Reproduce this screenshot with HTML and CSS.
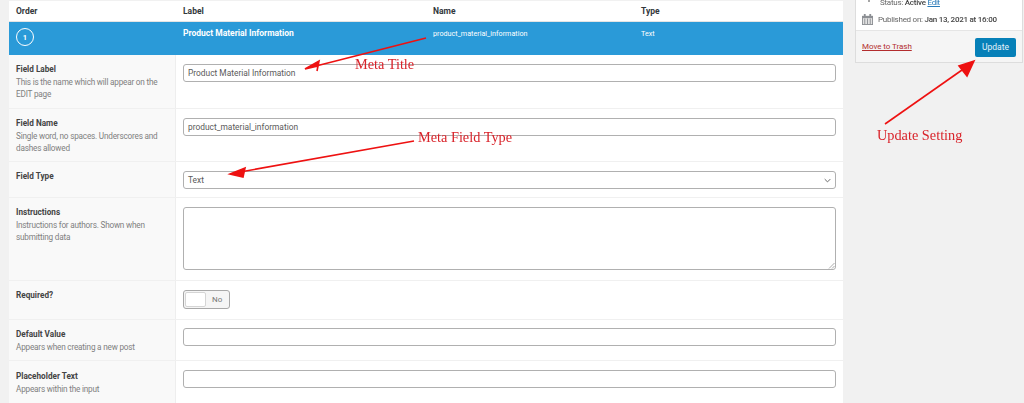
FILE: index.html
```html
<!DOCTYPE html>
<html lang="en">
<head>
<meta charset="utf-8">
<title>Field group editor</title>
<link rel="stylesheet" href="styles.css">
</head>
<body>
<div class="page">
  <main class="panel">
    <div class="cols head">
      <div class="c-order">Order</div>
      <div class="c-label">Label</div>
      <div class="c-name">Name</div>
      <div class="c-type">Type</div>
    </div>
    <div class="cols active">
      <div class="c-order"><span class="badge">1</span></div>
      <div class="c-label strong">Product Material Information</div>
      <div class="c-name">product_material_information</div>
      <div class="c-type">Text</div>
    </div>
    <section class="row r-label">
      <div class="side"><h4>Field Label</h4><p>This is the name which will appear on the EDIT page</p></div>
      <div class="main"><div class="input">Product Material Information</div></div>
    </section>
    <section class="row r-name">
      <div class="side"><h4>Field Name</h4><p>Single word, no spaces. Underscores and dashes allowed</p></div>
      <div class="main"><div class="input">product_material_information</div></div>
    </section>
    <section class="row r-type">
      <div class="side"><h4>Field Type</h4></div>
      <div class="main"><div class="input select">Text
        <svg class="chev" viewBox="0 0 10 6" width="7" height="5"><path d="M1 1l4 4 4-4" fill="none" stroke="#666" stroke-width="1.400"/></svg>
      </div></div>
    </section>
    <section class="row r-inst">
      <div class="side"><h4>Instructions</h4><p>Instructions for authors. Shown when submitting data</p></div>
      <div class="main"><div class="input area">
        <svg class="grip" viewBox="0 0 7 7" width="7" height="7"><path d="M1 6.500L6.500 1M4 6.500L6.500 4" stroke="#888" stroke-width=".7"/></svg>
      </div></div>
    </section>
    <section class="row r-req">
      <div class="side"><h4>Required?</h4></div>
      <div class="main"><div class="toggle"><span class="knob"></span><span class="no">No</span></div></div>
    </section>
    <section class="row r-def">
      <div class="side"><h4>Default Value</h4><p>Appears when creating a new post</p></div>
      <div class="main"><div class="input"></div></div>
    </section>
    <section class="row r-ph">
      <div class="side"><h4>Placeholder Text</h4><p>Appears within the input</p></div>
      <div class="main"><div class="input"></div></div>
    </section>
  </main>
  <aside class="card">
    <div class="card-body">
      <div class="meta status"><svg class="pin" viewBox="0 0 10 12" width="10" height="12"><path d="M5 0v8" stroke="#888" stroke-width="1.500"/></svg><span>Status: <b>Active</b> <a>Edit</a></span></div>
      <div class="meta pub">
        <svg class="cal" viewBox="0 0 12 12" width="11" height="11"><path d="M0 2h12v10H0z" fill="#8c8f94"/><path d="M2 0h2v3H2zM8 0h2v3H8z" fill="#8c8f94"/><path d="M1 4.500h10V11H1z" fill="#e2e2e2"/><path d="M3 5v6M6 5v6M9 5v6" stroke="#8c8f94"/></svg>
        <span>Published on: <b>Jan 13, 2021 at 16:00</b></span>
      </div>
    </div>
    <div class="card-foot"><a class="trash">Move to Trash</a><button class="update" type="button">Update</button></div>
  </aside>
</div>
<svg class="arrows" viewBox="0 0 1024 403" width="1024" height="403">
  <g stroke="#ee1111" stroke-width="1.600" fill="#ee1111">
    <path d="M426 38L316 66"/><path d="M305 69L319 61L317 71L318 66Z"/>
    <path d="M414 141L240 172"/><path d="M230 174L245 168L243 177Z"/>
    <path d="M885 124L962 70"/><path d="M974 61L967 76L959 66Z"/>
  </g>
</svg>
<span class="note n1">Meta Title</span>
<span class="note n2">Meta Field Type</span>
<span class="note n3">Update Setting</span>
</body>
</html>
```
FILE: styles.css
```css
* { box-sizing: border-box; }
html, body { margin: 0; padding: 0; }
body {
  width: 1024px; height: 403px; overflow: hidden; position: relative;
  background: #f1f1f1;
  font-family: Roboto, "Liberation Sans", sans-serif;
  font-size: 8px; color: #444;
}
.page { display: flex; align-items: flex-start; padding: 1px 2px 0 9px; gap: 12px; filter: blur(.35px); }
.panel { width: 834px; flex: none; background: #fff; height: 402px; overflow: hidden; }

.cols { display: flex; padding-left: 7px; }
.head { height: 21px; align-items: center; font-size: 8.500px; font-weight: 700; color: #32373c; border-bottom: 1px solid #e4e4e4; }
.active { height: 33px; background: #2a9ad8; color: #fff; padding-top: 7px; align-items: flex-start; font-size: 7.200px; }
.c-order { width: 167px; }
.c-label { width: 250px; }
.c-name { width: 208px; }
.c-type { flex: 1; }
.strong { font-size: 8.500px; line-height: 9px; font-weight: 700; }
.badge {
  display: flex; width: 18px; height: 18px; margin-top: -1px; border: 1px solid #fff; border-radius: 50%;
  align-items: center; justify-content: center; font-size: 7.500px; font-weight: 700;
}

.row { display: flex; border-bottom: 1px solid #f0f0f0; }
.side { width: 167px; background: #f9f9f9; border-right: 1px solid #eee; padding: 8px 7px 0; flex: none; }
.side h4 { margin: 0; font-size: 8.200px; line-height: 12px; font-weight: 700; color: #444; }
.side p { margin: 2px 0 0; line-height: 11.500px; color: #808080; font-size: 8.200px; letter-spacing: -.2px; }
.main { flex: 1; padding: 9px 7px 0 7px; }
.r-label { height: 54px; }
.r-name { height: 53px; }
.r-type { height: 36px; }
.r-inst { height: 83px; }
.r-req { height: 39px; }
.r-def { height: 41px; }
.r-def .main { padding-top: 8px; }
.r-ph { height: 42px; border-bottom: 0; }
.r-ph .side { padding-top: 9px; }

.input {
  height: 18px; border: 1px solid #b0b0b0; border-radius: 3px; background: #fff;
  padding: 0 4px; line-height: 17px; font-size: 8.400px; color: #5a5a5a; position: relative;
}
.select { display: flex; align-items: center; justify-content: space-between; padding-right: 4px; }
.area { height: 63px; }
.grip { position: absolute; right: 0; bottom: 0; }
.chev { flex: none; }
.toggle {
  width: 47px; height: 19px; border: 1px solid #a8a8a8; border-radius: 3px; background: #f5f5f5;
  display: flex; align-items: center; padding-left: 1px;
}
.knob { width: 21px; height: 15px; background: #fff; border: 1px solid #d5d5d5; border-radius: 2px; flex: none; }
.no { margin-left: 6px; color: #777; }

.card { width: 168px; flex: none; margin-top: -1px; background: #fff; border: 1px solid #ddd; border-top: 0; color: #666; }
.card-body { height: 30px; position: relative; padding-left: 6px; overflow: hidden; }
.meta { display: flex; gap: 5px; align-items: center; white-space: nowrap; letter-spacing: -.25px; }
.meta b { font-weight: 500; color: #444; }
.meta a { color: #2a7ab8; text-decoration: underline; }
.status { height: 6px; align-items: flex-end; line-height: 6px; margin-bottom: 8px; }
.status .pin { margin: 0 1px 0 2px; }
.pub { height: 11px; }
.card-foot { height: 32px; background: #f5f5f5; border-top: 1px solid #e5e5e5; display: flex; justify-content: space-between; align-items: center; padding: 0 6px; }
.trash { color: #b32d2e; text-decoration: underline; letter-spacing: -.05px; }
.update {
  width: 41px; height: 19px; padding: 0; border: 0; border-radius: 2px; background: #0680b8;
  color: #e6f3fa; font: inherit; font-size: 8.500px; margin-top: 1px;
}

.arrows { position: absolute; left: 0; top: 0; pointer-events: none; filter: blur(.3px); }
.note { position: absolute; font-family: "Liberation Serif", serif; color: #d9232a; font-size: 14.300px; line-height: 16px; white-space: nowrap; }
.n1 { left: 355px; top: 56px; }
.n2 { left: 418px; top: 129px; }
.n3 { left: 877px; top: 127px; }
```
